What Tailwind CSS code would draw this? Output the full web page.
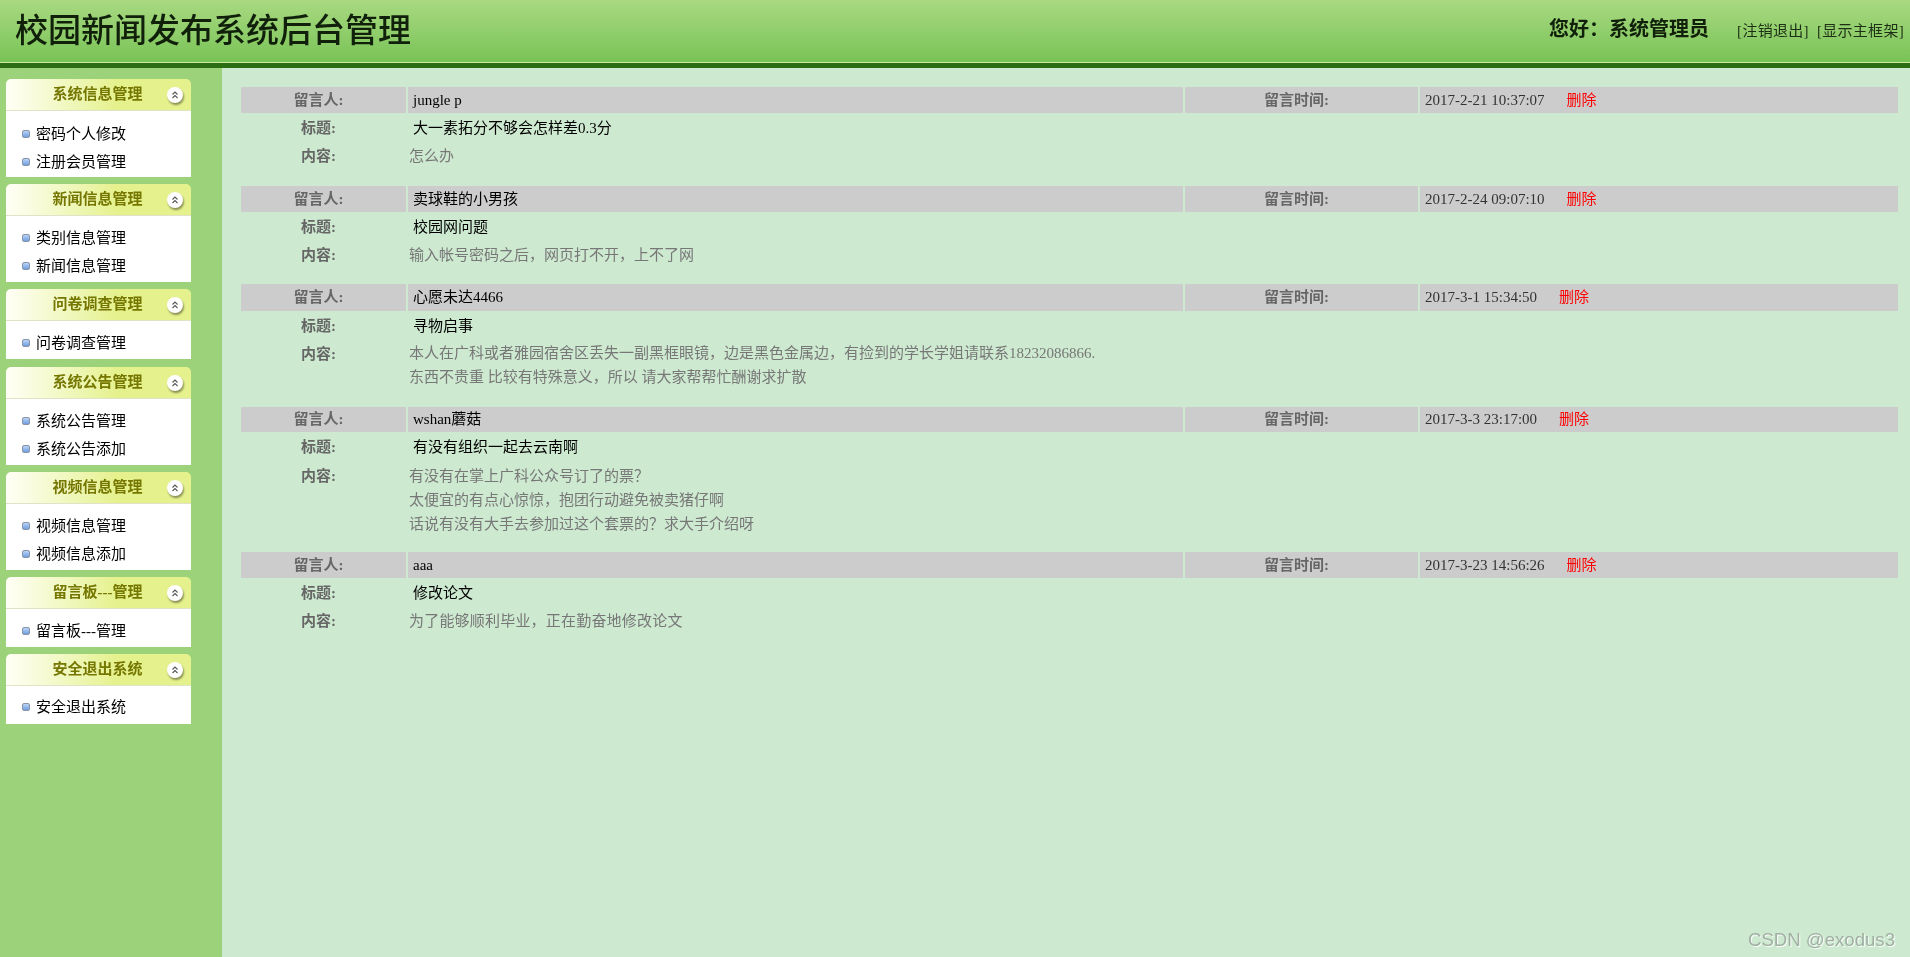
<!DOCTYPE html>
<html lang="zh-CN">
<head>
<meta charset="utf-8">
<title>校园新闻发布系统后台管理</title>
<script src="https://cdn.jsdelivr.net/npm/@tailwindcss/browser@4"></script>
</head>
<body class="m-0 bg-[#cde9d0]">
<div class="relative flex h-[957px] w-[1910px] flex-col overflow-hidden bg-[#cde9d0] font-['Liberation_Serif','Noto_Sans_CJK_SC',serif] text-[15px] text-black blur-[0.4px]">

  <header class="h-[68px] shrink-0 border-b-[5px] border-[#2a6d12]">
    <div class="flex h-[63px] items-center justify-between border-b border-[#cdeb9f] bg-gradient-to-b from-[#a9d981] to-[#78c356] pl-[15px] pr-[6px]">
      <h1 class="text-[33px] leading-[58px] font-medium text-[#10200a]">校园新闻发布系统后台管理</h1>
      <div class="flex items-center">
        <span class="mb-[5px] text-[20px] leading-[28px] font-bold text-[#10200a]">您好：系统管理员</span>
        <a class="ml-[28px] text-[15px] leading-[24px] tracking-[0.3px] text-[#1d2f15]">[注销退出]</a>
        <a class="ml-[8px] text-[15px] leading-[24px] tracking-[0.3px] text-[#1d2f15]">[显示主框架]</a>
      </div>
    </div>
  </header>

  <div class="flex min-h-0 flex-1">
    <aside class="flex w-[222px] shrink-0 flex-col gap-[7px] bg-[#9cd27a] pl-[6px] pr-[31px] pt-[11px]">

      <section>
        <div class="relative flex h-[32px] items-center justify-center rounded-t-[5px] border-b border-[#dfe3c8] bg-gradient-to-r from-[#fffff6] to-[#e5f18c] to-60% pr-[2px] font-bold text-[#757700]">系统信息管理
          <span class="absolute right-[8px] top-[8px] flex h-[16px] w-[16px] items-center justify-center rounded-full bg-white shadow-[1px_2px_2px_rgba(0,0,0,0.4)]"><svg width="10" height="10" viewBox="0 0 10 10" fill="none" stroke="#555" stroke-width="1.1"><path d="M2.5 4.5 5 2 7.5 4.5M2.5 8 5 5.5 7.5 8"/></svg></span>
        </div>
        <ul class="bg-white pb-[1px] pl-[16px] pt-[9px]">
          <li class="flex h-[28px] items-center gap-[6px]"><span class="h-[8px] w-[8px] rounded-[2px] border border-[#8a94a6] bg-gradient-to-b from-[#b9d3f7] to-[#6f9fe0]"></span>密码个人修改</li>
          <li class="flex h-[28px] items-center gap-[6px]"><span class="h-[8px] w-[8px] rounded-[2px] border border-[#8a94a6] bg-gradient-to-b from-[#b9d3f7] to-[#6f9fe0]"></span>注册会员管理</li>
        </ul>
      </section>

      <section>
        <div class="relative flex h-[32px] items-center justify-center rounded-t-[5px] border-b border-[#dfe3c8] bg-gradient-to-r from-[#fffff6] to-[#e5f18c] to-60% pr-[2px] font-bold text-[#757700]">新闻信息管理
          <span class="absolute right-[8px] top-[8px] flex h-[16px] w-[16px] items-center justify-center rounded-full bg-white shadow-[1px_2px_2px_rgba(0,0,0,0.4)]"><svg width="10" height="10" viewBox="0 0 10 10" fill="none" stroke="#555" stroke-width="1.1"><path d="M2.5 4.5 5 2 7.5 4.5M2.5 8 5 5.5 7.5 8"/></svg></span>
        </div>
        <ul class="bg-white pb-[2px] pl-[16px] pt-[8px]">
          <li class="flex h-[28px] items-center gap-[6px]"><span class="h-[8px] w-[8px] rounded-[2px] border border-[#8a94a6] bg-gradient-to-b from-[#b9d3f7] to-[#6f9fe0]"></span>类别信息管理</li>
          <li class="flex h-[28px] items-center gap-[6px]"><span class="h-[8px] w-[8px] rounded-[2px] border border-[#8a94a6] bg-gradient-to-b from-[#b9d3f7] to-[#6f9fe0]"></span>新闻信息管理</li>
        </ul>
      </section>

      <section>
        <div class="relative flex h-[32px] items-center justify-center rounded-t-[5px] border-b border-[#dfe3c8] bg-gradient-to-r from-[#fffff6] to-[#e5f18c] to-60% pr-[2px] font-bold text-[#757700]">问卷调查管理
          <span class="absolute right-[8px] top-[8px] flex h-[16px] w-[16px] items-center justify-center rounded-full bg-white shadow-[1px_2px_2px_rgba(0,0,0,0.4)]"><svg width="10" height="10" viewBox="0 0 10 10" fill="none" stroke="#555" stroke-width="1.1"><path d="M2.5 4.5 5 2 7.5 4.5M2.5 8 5 5.5 7.5 8"/></svg></span>
        </div>
        <ul class="bg-white pb-[2px] pl-[16px] pt-[8px]">
          <li class="flex h-[28px] items-center gap-[6px]"><span class="h-[8px] w-[8px] rounded-[2px] border border-[#8a94a6] bg-gradient-to-b from-[#b9d3f7] to-[#6f9fe0]"></span>问卷调查管理</li>
        </ul>
      </section>

      <section class="mt-[1px]">
        <div class="relative flex h-[32px] items-center justify-center rounded-t-[5px] border-b border-[#dfe3c8] bg-gradient-to-r from-[#fffff6] to-[#e5f18c] to-60% pr-[2px] font-bold text-[#757700]">系统公告管理
          <span class="absolute right-[8px] top-[8px] flex h-[16px] w-[16px] items-center justify-center rounded-full bg-white shadow-[1px_2px_2px_rgba(0,0,0,0.4)]"><svg width="10" height="10" viewBox="0 0 10 10" fill="none" stroke="#555" stroke-width="1.1"><path d="M2.5 4.5 5 2 7.5 4.5M2.5 8 5 5.5 7.5 8"/></svg></span>
        </div>
        <ul class="bg-white pb-[2px] pl-[16px] pt-[8px]">
          <li class="flex h-[28px] items-center gap-[6px]"><span class="h-[8px] w-[8px] rounded-[2px] border border-[#8a94a6] bg-gradient-to-b from-[#b9d3f7] to-[#6f9fe0]"></span>系统公告管理</li>
          <li class="flex h-[28px] items-center gap-[6px]"><span class="h-[8px] w-[8px] rounded-[2px] border border-[#8a94a6] bg-gradient-to-b from-[#b9d3f7] to-[#6f9fe0]"></span>系统公告添加</li>
        </ul>
      </section>

      <section>
        <div class="relative flex h-[32px] items-center justify-center rounded-t-[5px] border-b border-[#dfe3c8] bg-gradient-to-r from-[#fffff6] to-[#e5f18c] to-60% pr-[2px] font-bold text-[#757700]">视频信息管理
          <span class="absolute right-[8px] top-[8px] flex h-[16px] w-[16px] items-center justify-center rounded-full bg-white shadow-[1px_2px_2px_rgba(0,0,0,0.4)]"><svg width="10" height="10" viewBox="0 0 10 10" fill="none" stroke="#555" stroke-width="1.1"><path d="M2.5 4.5 5 2 7.5 4.5M2.5 8 5 5.5 7.5 8"/></svg></span>
        </div>
        <ul class="bg-white pb-[2px] pl-[16px] pt-[8px]">
          <li class="flex h-[28px] items-center gap-[6px]"><span class="h-[8px] w-[8px] rounded-[2px] border border-[#8a94a6] bg-gradient-to-b from-[#b9d3f7] to-[#6f9fe0]"></span>视频信息管理</li>
          <li class="flex h-[28px] items-center gap-[6px]"><span class="h-[8px] w-[8px] rounded-[2px] border border-[#8a94a6] bg-gradient-to-b from-[#b9d3f7] to-[#6f9fe0]"></span>视频信息添加</li>
        </ul>
      </section>

      <section>
        <div class="relative flex h-[32px] items-center justify-center rounded-t-[5px] border-b border-[#dfe3c8] bg-gradient-to-r from-[#fffff6] to-[#e5f18c] to-60% pr-[2px] font-bold text-[#757700]">留言板---管理
          <span class="absolute right-[8px] top-[8px] flex h-[16px] w-[16px] items-center justify-center rounded-full bg-white shadow-[1px_2px_2px_rgba(0,0,0,0.4)]"><svg width="10" height="10" viewBox="0 0 10 10" fill="none" stroke="#555" stroke-width="1.1"><path d="M2.5 4.5 5 2 7.5 4.5M2.5 8 5 5.5 7.5 8"/></svg></span>
        </div>
        <ul class="bg-white pb-[2px] pl-[16px] pt-[8px]">
          <li class="flex h-[28px] items-center gap-[6px]"><span class="h-[8px] w-[8px] rounded-[2px] border border-[#8a94a6] bg-gradient-to-b from-[#b9d3f7] to-[#6f9fe0]"></span>留言板---管理</li>
        </ul>
      </section>

      <section>
        <div class="relative flex h-[32px] items-center justify-center rounded-t-[5px] border-b border-[#dfe3c8] bg-gradient-to-r from-[#fffff6] to-[#e5f18c] to-60% pr-[2px] font-bold text-[#757700]">安全退出系统
          <span class="absolute right-[8px] top-[8px] flex h-[16px] w-[16px] items-center justify-center rounded-full bg-white shadow-[1px_2px_2px_rgba(0,0,0,0.4)]"><svg width="10" height="10" viewBox="0 0 10 10" fill="none" stroke="#555" stroke-width="1.1"><path d="M2.5 4.5 5 2 7.5 4.5M2.5 8 5 5.5 7.5 8"/></svg></span>
        </div>
        <ul class="bg-white pb-[3px] pl-[16px] pt-[7px]">
          <li class="flex h-[28px] items-center gap-[6px]"><span class="h-[8px] w-[8px] rounded-[2px] border border-[#8a94a6] bg-gradient-to-b from-[#b9d3f7] to-[#6f9fe0]"></span>安全退出系统</li>
        </ul>
      </section>
    </aside>

    <main class="min-w-0 flex-1 pl-[19px] pr-[12px] pt-[19px]">

      <div class="mb-[17px] grid grid-cols-[165px_775px_233px_478px] gap-[2px] leading-[26px]">
        <div class="bg-[#cccccc] pr-[10px] text-center font-bold text-[#666666]">留言人:</div>
        <div class="bg-[#cccccc] pl-[5px]">jungle p</div>
        <div class="bg-[#cccccc] pr-[10px] text-center font-bold text-[#666666]">留言时间:</div>
        <div class="bg-[#cccccc] pl-[5px]"><span class="text-[#333333]">2017-2-21 10:37:07</span><a class="ml-[22px] text-[#ff0000]">删除</a></div>
        <div class="pr-[10px] text-center font-bold text-[#666666]">标题:</div>
        <div class="col-span-3 pl-[5px]">大一素拓分不够会怎样差0.3分</div>
        <div class="pr-[10px] text-center font-bold text-[#666666]">内容:</div>
        <div class="col-span-3 pl-[1px] text-[#777777]">怎么办</div>
      </div>

      <div class="mb-[16px] grid grid-cols-[165px_775px_233px_478px] gap-[2px] leading-[26px]">
        <div class="bg-[#cccccc] pr-[10px] text-center font-bold text-[#666666]">留言人:</div>
        <div class="bg-[#cccccc] pl-[5px]">卖球鞋的小男孩</div>
        <div class="bg-[#cccccc] pr-[10px] text-center font-bold text-[#666666]">留言时间:</div>
        <div class="bg-[#cccccc] pl-[5px]"><span class="text-[#333333]">2017-2-24 09:07:10</span><a class="ml-[22px] text-[#ff0000]">删除</a></div>
        <div class="pr-[10px] text-center font-bold text-[#666666]">标题:</div>
        <div class="col-span-3 pl-[5px]">校园网问题</div>
        <div class="pr-[10px] text-center font-bold text-[#666666]">内容:</div>
        <div class="col-span-3 pl-[1px] text-[#777777]">输入帐号密码之后，网页打不开，上不了网</div>
      </div>

      <div class="mb-[18px] grid grid-cols-[165px_775px_233px_478px] gap-[2px] leading-[26px]">
        <div class="bg-[#cccccc] pr-[10px] text-center leading-[27px] font-bold text-[#666666]">留言人:</div>
        <div class="bg-[#cccccc] pl-[5px] leading-[27px]">心愿未达4466</div>
        <div class="bg-[#cccccc] pr-[10px] text-center leading-[27px] font-bold text-[#666666]">留言时间:</div>
        <div class="bg-[#cccccc] pl-[5px] leading-[27px]"><span class="text-[#333333]">2017-3-1 15:34:50</span><a class="ml-[22px] text-[#ff0000]">删除</a></div>
        <div class="pr-[10px] text-center font-bold text-[#666666]">标题:</div>
        <div class="col-span-3 pl-[5px]">寻物启事</div>
        <div class="pr-[10px] text-center font-bold text-[#666666]">内容:</div>
        <div class="col-span-3 pl-[1px] leading-[24px] text-[#777777]">本人在广科或者雅园宿舍区丢失一副黑框眼镜，边是黑色金属边，有捡到的学长学姐请联系18232086866.<br>东西不贵重 比较有特殊意义，所以 请大家帮帮忙酬谢求扩散</div>
      </div>

      <div class="mb-[16px] grid grid-cols-[165px_775px_233px_478px] gap-[2px] leading-[26px]">
        <div class="bg-[#cccccc] pr-[10px] text-center leading-[25px] font-bold text-[#666666]">留言人:</div>
        <div class="bg-[#cccccc] pl-[5px] leading-[25px]">wshan蘑菇</div>
        <div class="bg-[#cccccc] pr-[10px] text-center leading-[25px] font-bold text-[#666666]">留言时间:</div>
        <div class="bg-[#cccccc] pl-[5px] leading-[25px]"><span class="text-[#333333]">2017-3-3 23:17:00</span><a class="ml-[22px] text-[#ff0000]">删除</a></div>
        <div class="pr-[10px] text-center font-bold text-[#666666]">标题:</div>
        <div class="col-span-3 pl-[5px]">有没有组织一起去云南啊</div>
        <div class="pr-[10px] pt-[2px] text-center leading-[24px] font-bold text-[#666666]">内容:</div>
        <div class="col-span-3 pl-[1px] pt-[2px] leading-[24px] text-[#777777]">有没有在掌上广科公众号订了的票？<br>太便宜的有点心惊惊，抱团行动避免被卖猪仔啊<br>话说有没有大手去参加过这个套票的？求大手介绍呀</div>
      </div>

      <div class="mb-[17px] grid grid-cols-[165px_775px_233px_478px] gap-[2px] leading-[26px]">
        <div class="bg-[#cccccc] pr-[10px] text-center font-bold text-[#666666]">留言人:</div>
        <div class="bg-[#cccccc] pl-[5px]">aaa</div>
        <div class="bg-[#cccccc] pr-[10px] text-center font-bold text-[#666666]">留言时间:</div>
        <div class="bg-[#cccccc] pl-[5px]"><span class="text-[#333333]">2017-3-23 14:56:26</span><a class="ml-[22px] text-[#ff0000]">删除</a></div>
        <div class="pr-[10px] text-center font-bold text-[#666666]">标题:</div>
        <div class="col-span-3 pl-[5px]">修改论文</div>
        <div class="pr-[10px] text-center font-bold text-[#666666]">内容:</div>
        <div class="col-span-3 pl-[1px] tracking-[0.2px] text-[#777777]">为了能够顺利毕业，正在勤奋地修改论文</div>
      </div>
    </main>
  </div>

  <div class="absolute bottom-[4px] right-[15px] font-['Liberation_Sans',sans-serif] text-[18.6px] leading-[26px] text-[#9fb0a2] [text-shadow:1px_1px_1px_#ffffff]">CSDN @exodus3</div>
</div>
</body>
</html>
